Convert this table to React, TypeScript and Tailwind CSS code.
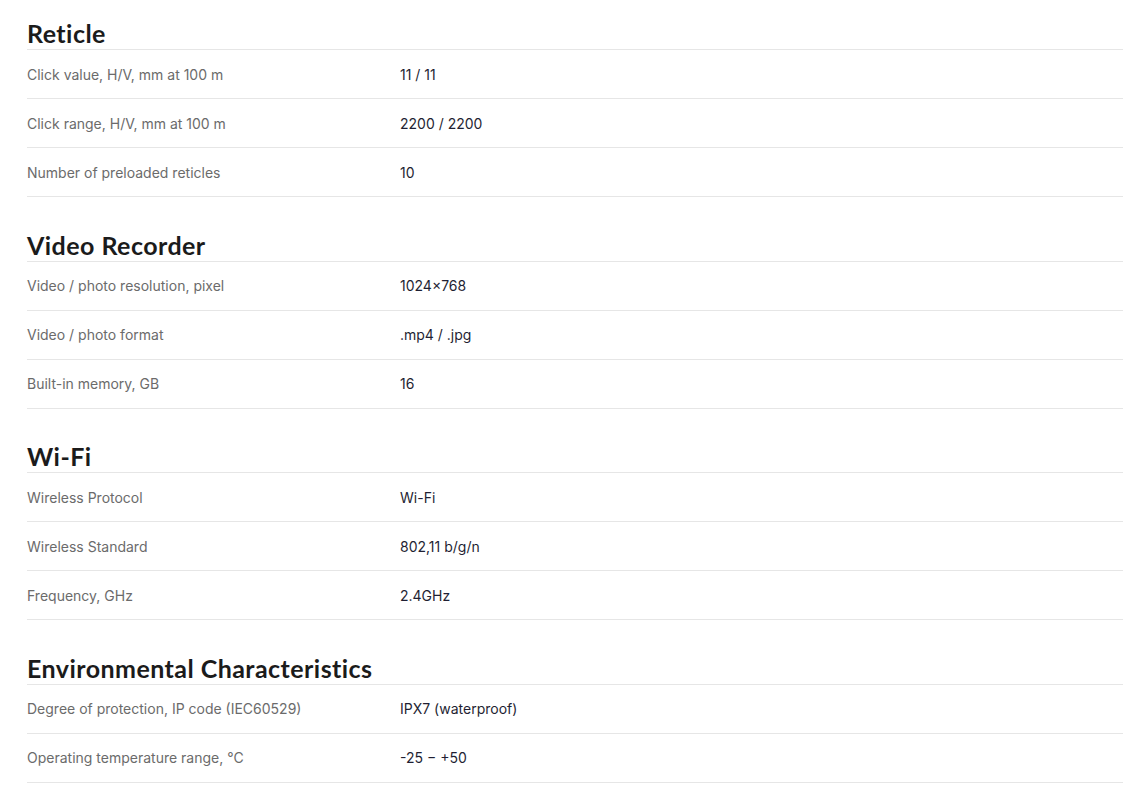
import React from 'react';

type Spec = { label: string; value: string };
type Section = { title: string; rows: Spec[] };

const sections: Section[] = [
    {
        title: 'Reticle',
        rows: [
            { label: 'Click value, H/V, mm at 100 m', value: '11 / 11' },
            { label: 'Click range, H/V, mm at 100 m', value: '2200 / 2200' },
            { label: 'Number of preloaded reticles', value: '10' },
        ],
    },
    {
        title: 'Video Recorder',
        rows: [
            { label: 'Video / photo resolution, pixel', value: '1024×768' },
            { label: 'Video / photo format', value: '.mp4 / .jpg' },
            { label: 'Built-in memory, GB', value: '16' },
        ],
    },
    {
        title: 'Wi-Fi',
        rows: [
            { label: 'Wireless Protocol', value: 'Wi-Fi' },
            { label: 'Wireless Standard', value: '802,11 b/g/n' },
            { label: 'Frequency, GHz', value: '2.4GHz' },
        ],
    },
    {
        title: 'Environmental Characteristics',
        rows: [
            { label: 'Degree of protection, IP code (IEC60529)', value: 'IPX7 (waterproof)' },
            { label: 'Operating temperature range, °C', value: '-25 − +50' },
        ],
    },
];

const App: React.FC = () => {
    return (
        <div className="min-h-screen bg-white pl-[27px] pr-[25px] pt-[17px]">
            {sections.map((section, i) => (
                <div key={section.title} className={i === 0 ? '' : 'mt-[31.5px]'}>
                    <h2 className="h-[33px] border-b border-[#e6e6e6] text-[25px] font-bold leading-[32px] tracking-[0.45px] text-[#1b1b1b] [font-family:Lato,'Liberation_Sans',sans-serif]">
                        {section.title}
                    </h2>
                    {section.rows.map((row) => (
                        <div
                            key={row.label}
                            className="flex h-[49px] items-center border-b border-[#e6e6e6] text-[14px] [font-family:Inter,'Liberation_Sans',sans-serif]"
                        >
                            <div className="w-[373px] shrink-0 text-[#6b6b6b]">{row.label}</div>
                            <div className="text-[#1f1f33]">{row.value}</div>
                        </div>
                    ))}
                </div>
            ))}
        </div>
    );
};

export default App;
